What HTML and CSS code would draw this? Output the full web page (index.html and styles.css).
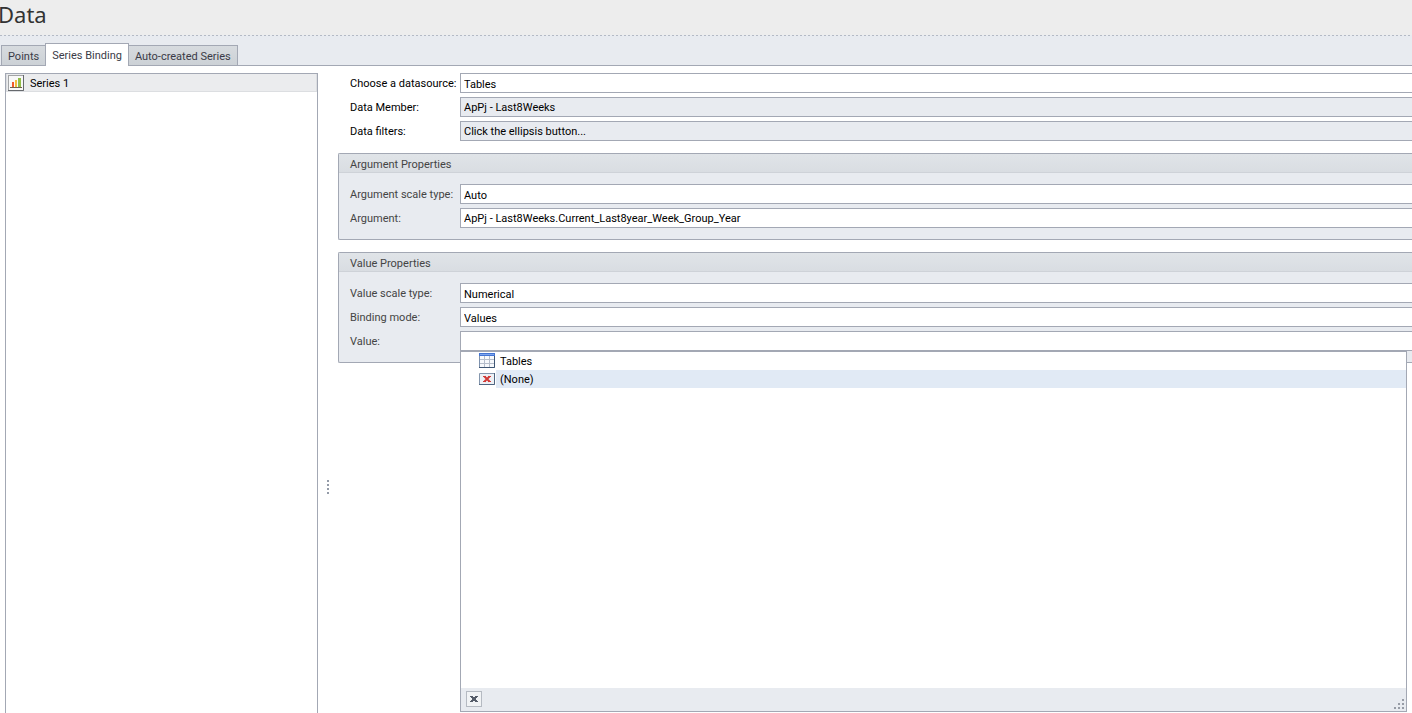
FILE: index.html
```html
<!DOCTYPE html>
<html lang="en">
<head>
<meta charset="utf-8">
<title>Data</title>
<link rel="stylesheet" href="styles.css">
</head>
<body>
<header class="page-header"><h1>Data</h1></header>
<nav class="tabs" role="tablist">
  <button class="tab" role="tab" type="button">Points</button>
  <button class="tab tab-active" role="tab" type="button" aria-selected="true">Series Binding</button>
  <button class="tab" role="tab" type="button">Auto-created Series</button>
</nav>
<main class="workspace">
  <aside class="series-list">
    <button class="series-item" type="button">
      <svg width="16" height="16" viewBox="0 0 16 16" aria-hidden="true">
        <rect x=".5" y=".5" width="15" height="15" fill="#f8f8f8" stroke="#a2a4a6"/>
        <path d="M15.500 0V15.500H0" fill="none" stroke="#66696d"/>
        <path d="M2 12.500H14" stroke="#70604c"/>
        <path d="M4 7h2v5H4z" fill="#f25a2b"/>
        <path d="M7 5h2v7H7z" fill="#f2bd3c"/>
        <path d="M10 3h3v9h-3z" fill="#92bd48"/>
      </svg>
      <span>Series 1</span>
    </button>
  </aside>
  <div class="splitter"><span class="grip"></span></div>
  <form class="properties">
    <div class="fields fields-top">
      <label for="source">Choose a datasource:</label>
      <select id="source" class="field"><option>Tables</option></select>
      <label for="member">Data Member:</label>
      <input id="member" class="field field-muted" type="text" value="ApPj - Last8Weeks">
      <label for="filters">Data filters:</label>
      <input id="filters" class="field field-muted" type="text" readonly value="Click the ellipsis button...">
    </div>
    <section class="group">
      <h2>Argument Properties</h2>
      <div class="fields">
        <label for="arg-scale">Argument scale type:</label>
        <select id="arg-scale" class="field"><option>Auto</option></select>
        <label for="argument">Argument:</label>
        <input id="argument" class="field" type="text" value="ApPj - Last8Weeks.Current_Last8year_Week_Group_Year">
      </div>
    </section>
    <section class="group">
      <h2>Value Properties</h2>
      <div class="fields">
        <label for="value-scale">Value scale type:</label>
        <select id="value-scale" class="field"><option>Numerical</option></select>
        <label for="mode">Binding mode:</label>
        <select id="mode" class="field"><option>Values</option></select>
        <label for="value">Value:</label>
        <div class="combo">
          <input id="value" class="field" type="text">
          <div class="popup">
            <ul class="tree">
              <li>
                <svg width="16" height="16" viewBox="0 0 16 16" aria-hidden="true">
                  <path d="M0 0h16v15H0z" fill="#f7f9fc"/>
                  <path d="M0 0h16v3H0z" fill="#4374d3"/>
                  <path d="M1 1h14v1H1z" fill="#7da5ee"/>
                  <path d="M5.500 3v11M10.500 3v11M1 6.500h14M1 10.500h14" stroke="#b5bdcb" fill="none"/>
                  <path d="M.5 3v11.500h15V3" stroke="#7d91ad" fill="none"/>
                  <path d="M0 14.500h15.500V3" stroke="#3f5674" fill="none"/>
                </svg>
                <span>Tables</span>
              </li>
              <li class="current">
                <svg width="16" height="16" viewBox="0 0 16 16" aria-hidden="true">
                  <path d="M.5 2.500h15v11H.5z" fill="#eef1f5" stroke="#8496ad"/>
                  <path d="M0 13.500h15.500V2" stroke="#4e6581" fill="none"/>
                  <path d="M5.500 5.500l5 5M10.500 5.500l-5 5" stroke="#d23a36" stroke-width="2" fill="none"/>
                  <path d="M4 5.500h3M9 5.500h3M4 10.500h3M9 10.500h3" stroke="#d23a36" fill="none"/>
                </svg>
                <span>(None)</span>
              </li>
            </ul>
            <div class="popup-footer">
              <button class="close" type="button" aria-label="Close">
                <svg width="8" height="6" viewBox="0 0 8 6" aria-hidden="true">
                  <path d="M0 0h3v1h2V0h3v1H7v1H6v1H5h1v1h1v1h1v1H5V5H3v1H0V5h1V4h1V3h1H2V2H1V1H0z" fill="#555c69"/>
                </svg>
              </button>
              <svg class="resize" width="10" height="10" viewBox="0 0 10 10" aria-hidden="true">
                <path d="M8 0h2v2H8zM4 4h2v2H4zM8 4h2v2H8zM0 8h2v2H0zM4 8h2v2H4zM8 8h2v2H8z" fill="#979ca6"/>
              </svg>
            </div>
          </div>
        </div>
      </div>
    </section>
  </form>
</main>
</body>
</html>
```
FILE: styles.css
```css
* {
  box-sizing: border-box;
}

body {
  margin: 0;
  height: 100vh;
  display: flex;
  flex-direction: column;
  overflow: hidden;
  background: #fff;
  color: #000;
  font: 11px/18px Roboto, "Liberation Sans", Arial, sans-serif;
}

button,
input,
select {
  font: inherit;
  color: inherit;
  border-radius: 0;
  margin: 0;
}

svg {
  display: block;
  flex: none;
}

.page-header {
  height: 36px;
  background:
    repeating-linear-gradient(90deg, #b4bac5 0 2px, #e8ebf0 2px 4px) bottom / 100% 1px no-repeat,
    #ededed;
}

h1 {
  margin: 0;
  margin-left: -2px;
  font: 22px/28px "Noto Sans", sans-serif;
  color: #333;
}

.tabs {
  height: 30px;
  display: flex;
  align-items: flex-end;
  padding-left: 1px;
  background: #e8ebf0;
  border-bottom: 1px solid #a3a8b4;
}

.tab {
  height: 20px;
  padding: 2px 6px 0;
  border: 1px solid #a3a8b4;
  border-bottom: 0;
  background: linear-gradient(#d7dbdf, #ccd1d6);
  color: #3b3b47;
}

.tab:first-child {
  border-right: 0;
}

.tab:last-child {
  border-left: 0;
}

.tab-active {
  height: 23px;
  margin-bottom: -1px;
  background: #fff;
}

.workspace {
  flex: 1;
  display: flex;
  padding: 7px 0 0 5px;
}

.series-list {
  width: 313px;
  border: 1px solid #a3a8b4;
  border-bottom: 0;
}

.series-item {
  width: 100%;
  height: 18px;
  display: flex;
  align-items: center;
  gap: 6px;
  padding: 0 1px;
  border: 1px solid #dcdee1;
  border-top: 0;
  background: #ebecee;
}

.series-item span {
  padding-top: 2px;
}

.splitter {
  width: 20px;
  display: flex;
  align-items: center;
  justify-content: center;
  padding-top: 188px;
}

.grip {
  width: 2px;
  height: 14px;
  background: repeating-linear-gradient(#949ba8 0 2px, transparent 2px 4px);
}

.properties {
  flex: 1;
  min-width: 0;
}

.fields {
  display: grid;
  grid-template-columns: 110px 1fr;
  row-gap: 4px;
  padding: 11px 0 11px 11px;
}

.fields label {
  padding-top: 2px;
  line-height: 18px;
}

.fields-top {
  padding: 0 0 12px 12px;
}

.field {
  display: block;
  width: 100%;
  height: 20px;
  padding: 0 3px;
  border: 1px solid #a3a8b4;
  border-right: 0;
  background: #fff;
  appearance: none;
  outline: 0;
}

select.field {
  padding-top: 2px;
}

.field-muted {
  background: #e8ebf0;
}

.group {
  margin-bottom: 12px;
  border: 1px solid #a3a8b4;
  border-right: 0;
  border-radius: 2px 0 0 2px;
  background: #e8ebf0;
}

.group label,
.group h2 {
  color: #444;
}

.group h2 {
  margin: 0;
  height: 19px;
  padding: 2px 11px 0;
  border-bottom: 1px solid #ced2d8;
  background: linear-gradient(#e0e4e8, #d9dde2);
  font-size: 11px;
  line-height: 18px;
  font-weight: normal;
}

.combo {
  position: relative;
}

.popup {
  position: absolute;
  top: 19px;
  left: 0;
  right: 5px;
  border: 1px solid #a3a8b4;
  border-top-width: 2px;
  background: #fff;
}

.tree {
  margin: 0;
  padding: 0 0 0 18px;
  min-height: 336px;
  list-style: none;
}

.tree li {
  display: flex;
  align-items: center;
  gap: 1px;
  height: 18px;
}

.tree span {
  flex: 1;
  height: 18px;
  padding: 1px 0 0 4px;
}

.current span {
  background: #e1eaf5;
}

.popup-footer {
  height: 23px;
  display: flex;
  align-items: center;
  justify-content: space-between;
  padding: 0 2px 2px 5px;
  background: #e8ebf0;
}

.close {
  width: 16px;
  height: 16px;
  display: grid;
  place-items: center;
  padding: 0;
  border: 1px solid #b5bac2;
  background: #f1f3f5;
}

.resize {
  align-self: flex-end;
}
```
